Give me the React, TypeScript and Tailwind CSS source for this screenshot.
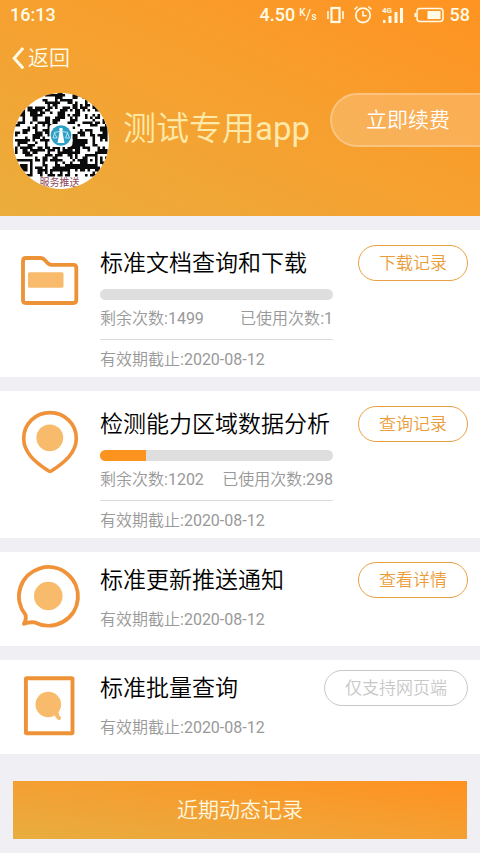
import type { ReactNode } from 'react';

interface Service {
  id: number;
  title: string;
  action: string;
  expires: string;
  icon: ReactNode;
  usage?: { left: number; used: number };
  disabled?: boolean;
}

const FolderIcon = () => (
  <svg viewBox="0 0 100 94" className="w-full" fill="none" aria-hidden="true">
    <path
      d="M26 28H40.5C42 28 43 28.3 44 29.3L48 33.5C49 34.4 50 34.8 51.5 34.8H73.5Q76.3 34.8 76.3 37.6V70.3Q76.3 73 73.5 73H25.7Q23 73 23 70.3V31Q23 28 26 28Z"
      stroke="#ee9237"
      strokeWidth="3.8"
      strokeLinejoin="round"
    />
    <rect x="28" y="42.3" width="35.5" height="15.5" rx="1.5" fill="#f8bb6c" />
  </svg>
);

const PinIcon = () => (
  <svg viewBox="0 0 100 94" className="w-full" fill="none" aria-hidden="true">
    <path
      d="M50 21.6C64.8 21.6 76.3 33 76.3 47.6C76.3 61.5 65 71 52 79.6Q50 81 48 79.6C35 71 23.7 61.5 23.7 47.6C23.7 33 35.2 21.6 50 21.6Z"
      stroke="#f0923a"
      strokeWidth="3.6"
      strokeLinejoin="round"
    />
    <circle cx="49.8" cy="46.8" r="13.4" fill="#f8bb6c" />
  </svg>
);

const ChatIcon = () => (
  <svg viewBox="0 0 100 94" className="w-full" fill="none" aria-hidden="true">
    <path
      d="M25.4 62.6A29.5 29.3 0 1 1 35 70.4Q29.5 69.6 24 71.7Q26.8 66.6 25.4 62.6Z"
      stroke="#f0923a"
      strokeWidth="3.9"
      strokeLinejoin="round"
    />
    <circle cx="48.3" cy="44" r="14.3" fill="#f8bb6c" />
  </svg>
);

const SearchDocIcon = () => (
  <svg viewBox="0 0 100 94" className="w-full" fill="none" aria-hidden="true">
    <rect x="25.9" y="18.2" width="46.6" height="55" rx="0.8" stroke="#ee9237" strokeWidth="3.9" />
    <circle cx="48.3" cy="44.5" r="12.8" fill="#f8bb6c" />
    <path d="M54 51.5L57 54Q56.5 56 59 58" stroke="#f8bb6c" strokeWidth="4" strokeLinecap="round" />
  </svg>
);

const services: Service[] = [
  {
    id: 1,
    title: '标准文档查询和下载',
    action: '下载记录',
    expires: '2020-08-12',
    icon: <FolderIcon />,
    usage: { left: 1499, used: 1 },
  },
  {
    id: 2,
    title: '检测能力区域数据分析',
    action: '查询记录',
    expires: '2020-08-12',
    icon: <PinIcon />,
    usage: { left: 1202, used: 298 },
  },
  {
    id: 3,
    title: '标准更新推送通知',
    action: '查看详情',
    expires: '2020-08-12',
    icon: <ChatIcon />,
  },
  {
    id: 4,
    title: '标准批量查询',
    action: '仅支持网页端',
    expires: '2020-08-12',
    icon: <SearchDocIcon />,
    disabled: true,
  },
];

const SIZE = 37;

// concentric square with its top left corner at x, y
const ring = (c: number, r: number, x: number, y: number, size: number) => {
  const half = (size - 1) / 2;
  const d = Math.max(Math.abs(c - x - half), Math.abs(r - y - half));
  if (d > half + (size === 7 ? 1 : 0)) return null;
  return d === half || d <= half - 2;
};

const qrPath = () => {
  let seed = 20200812;
  let d = '';
  let above: boolean[] = [];
  for (let r = 0; r < SIZE; r++) {
    const row: boolean[] = [];
    for (let c = 0; c < SIZE; c++) {
      seed = (Math.imul(seed, 1664525) + 1013904223) >>> 0;
      const n = seed / 4294967296;
      const fixed =
        ring(c, r, 0, 0, 7) ??
        ring(c, r, SIZE - 7, 0, 7) ??
        ring(c, r, 0, SIZE - 7, 7) ??
        ring(c, r, SIZE - 9, SIZE - 9, 5);
      // a few modules repeat their neighbour so that the pattern clumps
      let dark = n < 0.36;
      if (n > 0.66) dark = n < 0.83 ? !!row[c - 1] : !!above[c];
      dark = fixed ?? dark;
      row.push(dark);
      if (dark) d += `M${c} ${r}h1.03v1.03h-1.03z`;
    }
    above = row;
  }
  return d;
};

const QrAvatar = () => (
  <svg
    viewBox="0 0 96 96"
    className="size-24 shrink-0 rounded-full bg-white"
    role="img"
    aria-label="服务推送"
  >
    <path d={qrPath()} transform="translate(2 -9) scale(2.5)" fill="#0b0b0b" />
    <rect x="36.5" y="31" width="23" height="23" rx="4" fill="#fff" />
    <circle cx="48" cy="42.5" r="10.3" fill="#2b9fc6" />
    <circle cx="48" cy="36.5" r="1.8" fill="#fff" />
    <path d="M46.7 38H49.3L51.5 50H44.5Z" fill="#fff" />
    <path
      d="M41 39.5Q48 37 55 39.5M41.5 40L40 45H44ZM54.5 40L52.5 45H56.5Z"
      stroke="#d9f1f8"
      strokeWidth="0.8"
      fill="none"
    />
    <text
      x="46.5"
      y="93"
      textAnchor="middle"
      fontSize="10"
      fill="#8d4a5c"
      className="font-['Noto_Sans_CJK_SC',sans-serif]"
    >
      服务推送
    </text>
  </svg>
);

const StatusBar = () => (
  <div className="flex h-[30px] items-center justify-between px-[10px] text-lg font-medium text-[#fffbe6]">
    <span>16:13</span>
    <div className="flex items-center gap-[10px]">
      <div className="flex items-center gap-1">
        <span>4.50</span>
        <span className="flex text-[10px] leading-3">
          <span className="pb-1">K</span>
          <span className="text-sm leading-4 font-normal">/</span>
          <span className="pt-1">s</span>
        </span>
      </div>
      <svg viewBox="0 0 17 18" className="w-[17px]" fill="none" stroke="currentColor" aria-hidden="true">
        <rect x="4.5" y="2" width="8" height="14" strokeWidth="2.2" />
        <path d="M1 5V13M16 5V13" strokeWidth="1.6" />
      </svg>
      <svg viewBox="0 0 18 18" className="w-[18px]" fill="none" stroke="currentColor" strokeLinecap="round" aria-hidden="true">
        <circle cx="9" cy="9.3" r="7.2" strokeWidth="1.8" />
        <path d="M9 5.5V9.8H12.2" strokeWidth="1.6" />
        <path d="M1 3L3.2 1M17 3L14.8 1" strokeWidth="1.6" />
      </svg>
      <svg viewBox="0 0 22 18" className="w-[22px]" fill="currentColor" aria-hidden="true">
        <text x="0" y="7" fontSize="8" fontWeight="700">
          4G
        </text>
        <rect x="1" y="14" width="2.5" height="3" />
        <rect x="6.5" y="10" width="3" height="7" />
        <rect x="12.5" y="6" width="3" height="11" />
        <rect x="18" y="2" width="3" height="15" />
      </svg>
      <div className="flex items-center gap-[6px]">
        <svg viewBox="0 0 30 16" className="w-[30px]" fill="none" aria-hidden="true">
          <rect x="3" y="1.4" width="26" height="13.2" rx="3" stroke="currentColor" strokeWidth="1.5" />
          <path d="M0.5 6H2.5V10H0.5Z" fill="currentColor" />
          <rect x="13.5" y="4" width="13" height="8" fill="currentColor" />
        </svg>
        <span>58</span>
      </div>
    </div>
  </div>
);

const Header = () => (
  <header className="bg-linear-to-tr from-[#ebad3c] to-[#ff9321] pb-[27px]">
    <StatusBar />
    <nav className="flex h-[63px] items-start px-3 pt-3">
      <a href="#back" className="flex items-center gap-1 text-[21px] leading-8 font-[350] text-[#fffbe6]">
        <svg viewBox="0 0 12 22" className="w-3" fill="none" stroke="currentColor" strokeWidth="3" aria-hidden="true">
          <path d="M11.2 1L2.2 11.2L11.2 21.4" />
        </svg>
        返回
      </a>
    </nav>
    <div className="flex items-start pl-[13px]">
      <QrAvatar />
      <h1 className="ml-[14px] flex-1 text-[33px] leading-[72px] font-[350] whitespace-nowrap text-[#ffe9a8]">
        测试专用<span className="font-normal">app</span>
      </h1>
      <button
        type="button"
        className="h-[54px] rounded-l-full border-2 border-r-0 border-white/40 bg-white/20 bg-clip-padding pt-[2px] pr-[30px] pl-[34px] text-[21px] font-[350] whitespace-nowrap text-white"
      >
        立即续费
      </button>
    </div>
  </header>
);

const Field = ({ label, value }: { label: string; value: string | number }) => (
  <span className="font-[350]">
    {label}
    <span className="font-normal">:{value}</span>
  </span>
);

const Usage = ({ left, used }: { left: number; used: number }) => (
  <div className="mt-2 border-b border-[#dcdcdc] pb-2">
    <div className="h-[11px] overflow-hidden rounded-full bg-[#dedede]">
      <div className="h-full bg-[#fd931f]" style={{ width: `${used > 1 ? (used / (left + used)) * 100 : 0}%` }} />
    </div>
    <div className="mt-[7px] flex justify-between whitespace-nowrap">
      <Field label="剩余次数" value={left} />
      <Field label="已使用次数" value={used} />
    </div>
  </div>
);

const ServiceCard = ({ service }: { service: Service }) => {
  const { title, action, expires, icon, usage, disabled } = service;
  return (
    <section className="flex bg-white">
      <div className="w-[100px] shrink-0">{icon}</div>
      <div className={usage ? 'flex-1 pt-[15px] pr-3 pb-[5px]' : 'flex-1 pt-[10px] pr-3 pb-[14px]'}>
        <div className="flex h-9 items-center justify-between">
          <h2 className="pt-[2px] text-[23px] font-[350] whitespace-nowrap text-black">{title}</h2>
          <button
            type="button"
            disabled={disabled}
            className={
              disabled
                ? 'h-9 rounded-full border border-[#c8c8c8] px-5 pt-[2px] text-[17px] font-[350] whitespace-nowrap text-[#c8c8c8]'
                : 'h-9 rounded-full border border-[#e8a040] px-5 pt-[2px] text-[17px] font-[350] whitespace-nowrap text-[#eb9d3b]'
            }
          >
            {action}
          </button>
        </div>
        <div className="mr-[135px] text-base text-[#999]">
          {usage && <Usage left={usage.left} used={usage.used} />}
          <p className={usage ? 'mt-2' : 'mt-[10px]'}>
            <Field label="有效期截止" value={expires} />
          </p>
        </div>
      </div>
    </section>
  );
};

const App = () => {
  return (
    <div className="min-h-screen bg-[#efeff4] font-[Roboto,'Noto_Sans_CJK_SC',sans-serif]">
      <Header />
      <main className="flex flex-col gap-[14px] pt-[14px] pb-[14px]">
        {services.map((service) => (
          <ServiceCard key={service.id} service={service} />
        ))}
        <button
          type="button"
          className="mx-[13px] mt-[13px] h-[58px] bg-linear-to-tr from-[#e8ad40] to-[#ff9120] pt-[2px] text-[21px] font-[350] text-[#fff8e0]"
        >
          近期动态记录
        </button>
      </main>
    </div>
  );
};

export default App;
